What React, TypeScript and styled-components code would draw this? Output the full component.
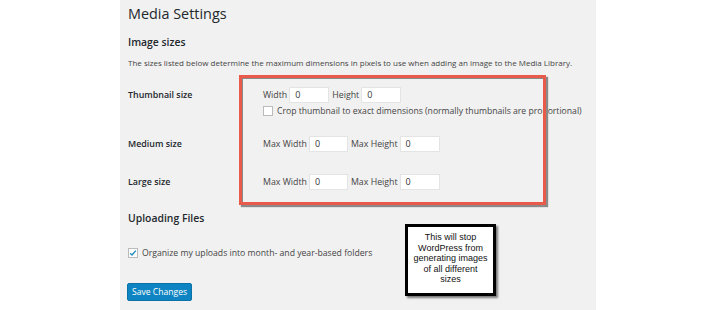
import React from "react";
import styled, { createGlobalStyle } from "styled-components";

const Global = createGlobalStyle`
  html, body { margin: 0; padding: 0; background: #ffffff; }
  body { font-family: "Open Sans", "Liberation Sans", sans-serif; color: #23282d; }
`;

const Panel = styled.div`
  position: relative;
  margin-left: 120px;
  width: 476px;
  height: 310px;
  background: #f1f1f1;
  padding: 0 0 0 8px;
  box-sizing: border-box;
  overflow: hidden;
`;

const Title = styled.h1`
  margin: 0;
  padding-top: 3px;
  font-size: 14.4px;
  font-weight: 400;
  line-height: 21px;
  color: #23282d;
`;

const SectionTitle = styled.h2<{ $top: number }>`
  margin: ${(p) => p.$top}px 0 0;
  font-size: 10.4px;
  font-weight: 600;
  line-height: 14px;
  color: #23282d;
`;

const Intro = styled.p`
  margin: 8px 0 0;
  font-size: 8px;
  line-height: 12px;
  white-space: nowrap;
  color: #444;
`;

const FormTable = styled.div`
  display: grid;
  grid-template-columns: 135px 1fr;
  margin-top: 18px;
`;

const Label = styled.div<{ $h: number }>`
  height: ${(p) => p.$h}px;
  font-size: 8.9px;
  font-weight: 600;
  line-height: 16px;
  color: #23282d;
`;

const Field = styled.div<{ $h: number }>`
  height: ${(p) => p.$h}px;
  display: flex;
  flex-direction: column;
  font-size: 9px;
  color: #444;
`;

const Line = styled.div<{ $small?: boolean }>`
  display: flex;
  align-items: center;
  height: 16px;
  white-space: nowrap;
  font-size: ${(p) => (p.$small ? "8.65px" : "8.8px")};
`;

const Input = styled.div<{ $w: number }>`
  width: ${(p) => p.$w}px;
  height: 16px;
  box-sizing: border-box;
  background: #fff;
  border: 1px solid #e4e4e4;
  font-size: 9px;
  line-height: 14px;
  padding-left: 5px;
  margin: 0 3px 0 2px;
  color: #333;
`;

const Check = styled.span`
  width: 10px;
  height: 10px;
  box-sizing: border-box;
  background: #fff;
  border: 1px solid #bbb;
  margin-right: 4px;
  display: inline-flex;
  align-items: center;
  justify-content: center;
  flex: none;
`;

const CheckRow = styled.div`
  display: flex;
  align-items: center;
  margin-top: 21px;
  font-size: 8.66px;
  color: #444;
  height: 14px;
  white-space: nowrap;
`;

const Button = styled.div`
  margin-top: 23px;
  margin-left: -1px;
  width: 65px;
  height: 18px;
  box-sizing: border-box;
  background: #0e85c2;
  border: 1px solid #0973a8;
  border-radius: 2px;
  color: #fff;
  font-size: 8.6px;
  line-height: 16px;
  text-align: center;
  white-space: nowrap;
`;

const RedBox = styled.div`
  position: absolute;
  left: 119px;
  top: 75px;
  width: 307px;
  height: 130px;
  box-sizing: border-box;
  border: 3px solid #ea5a4b;
  box-shadow: inset 1px 1px 0 #8a8a8a, 2px 2px 1px #8a8a8a;
  pointer-events: none;
`;

const Callout = styled.div`
  position: absolute;
  left: 285px;
  top: 224px;
  width: 91px;
  height: 72px;
  box-sizing: border-box;
  background: #fff;
  border: 3px solid #000;
  box-shadow: 2px 2px 2px #777;
  font-family: "Liberation Sans", Arial, sans-serif;
  font-size: 9px;
  line-height: 10.5px;
  color: #111;
  text-align: center;
  padding: 5px 0 0;
  white-space: nowrap;
`;

export default function App() {
  return (
    <>
      <Global />
      <Panel>
        <Title>Media Settings</Title>
        <SectionTitle $top={11}>Image sizes</SectionTitle>
        <Intro>
          The sizes listed below determine the maximum dimensions in pixels to use when adding an image to the Media Library.
        </Intro>
        <FormTable>
          <Label $h={49}>Thumbnail size</Label>
          <Field $h={49}>
            <Line>
              Width<Input $w={40}>0</Input>Height<Input $w={40}>0</Input>
            </Line>
            <Line $small>
              <Check />
              Crop thumbnail to exact dimensions (normally thumbnails are proportional)
            </Line>
          </Field>
          <Label $h={38}>Medium size</Label>
          <Field $h={38}>
            <Line>
              Max Width<Input $w={39}>0</Input>Max Height<Input $w={40}>0</Input>
            </Line>
          </Field>
          <Label $h={16}>Large size</Label>
          <Field $h={16}>
            <Line>
              Max Width<Input $w={39}>0</Input>Max Height<Input $w={40}>0</Input>
            </Line>
          </Field>
        </FormTable>
        <SectionTitle $top={21}>Uploading Files</SectionTitle>
        <CheckRow>
          <Check>
            <svg width="8" height="8" viewBox="0 0 8 8">
              <path d="M1.2 4.2 L3 6 L6.8 1.6" stroke="#1e8cbe" strokeWidth="1.4" fill="none" />
            </svg>
          </Check>
          Organize my uploads into month- and year-based folders
        </CheckRow>
        <Button>Save Changes</Button>
        <RedBox />
        <Callout>
          This will stop
          <br />
          WordPress from
          <br />
          generating images
          <br />
          of all different
          <br />
          sizes
        </Callout>
      </Panel>
    </>
  );
}
